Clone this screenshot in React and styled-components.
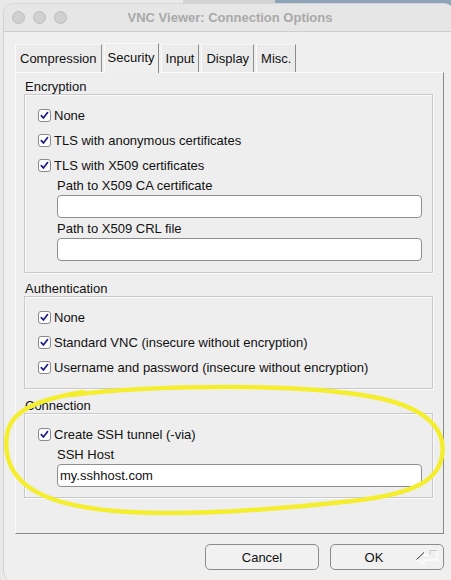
import React from 'react'
import styled, { createGlobalStyle } from 'styled-components'

const GlobalStyle = createGlobalStyle`
  html, body {
    margin: 0;
    height: 100%;
    overflow: hidden;
  }
  body {
    font-family: "Liberation Sans", Arial, sans-serif;
    font-size: 13px;
    color: #111;
    background: linear-gradient(to right, #e9e9e9 0 183px, #d2d2d2 183px 275px, #8fa4bb 275px);
  }
`;

const Backdrop = styled.div`
  display: flex;
  padding: 3px 0 0 3px;
`;

const Window = styled.div`
  position: relative;
  display: flex;
  flex-direction: column;
  width: 450px;
  height: 577px;
  flex-shrink: 0;
  background: #efefef;
  border-left: 1px solid #d0d0d0;
  border-top: 1px solid #d6d6d6;
  border-radius: 10px 10px 0 10px;
  overflow: hidden;
`;

const TitleBar = styled.div`
  display: grid;
  grid-template-columns: 1fr auto 1fr;
  align-items: center;
  height: 27px;
  padding: 0 8px;
  background: #e6e6e6;
  border-bottom: 1px solid #cdcdcd;
`;

const Lights = styled.div`
  display: flex;
  gap: 8px;
`;

const Light = styled.span`
  width: 11px;
  height: 11px;
  border-radius: 50%;
  background: #d0d0d0;
  border: 1px solid #bcbcbc;
`;

const Title = styled.div`
  font-weight: bold;
  font-size: 13px;
  color: #a9a9a9;
  margin-left: 2px;
`;

const Body = styled.div`
  display: flex;
  flex-direction: column;
  padding: 10px 0 0 11px;
`;

const TabRow = styled.div`
  display: flex;
  align-items: flex-end;
  gap: 2px;
  height: 30px;
`;

const Tab = styled.div`
  position: relative;
  z-index: ${p => (p.$active ? 1 : 0)};
  display: flex;
  align-items: center;
  height: ${p => (p.$active ? '30px' : '28px')};
  margin-bottom: ${p => (p.$active ? '-1px' : '0')};
  padding: ${p => (p.$active ? '0 3px 3px' : '0 4px')};
  background: ${p => (p.$active ? '#efefef' : '#ebebeb')};
  border-top: 1px solid ${p => (p.$active ? '#fafafa' : '#f6f6f6')};
  border-left: 1px solid #fbfbfb;
  border-right: 1px solid #8c8c8c;
  box-sizing: border-box;
`;

const Pane = styled.div`
  display: flex;
  flex-direction: column;
  width: 429px;
  height: 462px;
  box-sizing: border-box;
  padding: 6px 10px 0 8px;
  background: #eeeeee;
  border-style: solid;
  border-width: 1px;
  border-color: #fbfbfb #8a8a8a #8a8a8a #fbfbfb;
`;

const Section = styled.section`
  display: flex;
  flex-direction: column;
  margin-bottom: ${p => p.$gap || 0}px;
`;

const Legend = styled.div`
  padding-left: 1px;
  line-height: 15px;
`;

const Frame = styled.div`
  display: flex;
  flex-direction: column;
  padding: ${p => p.$pad || '8px 10px 8px 13px'};
  border: 1px solid #c9c9c9;
  box-shadow: inset 1px 1px 0 #fafafa, 1px 1px 0 #fafafa;
`;

const CheckRow = styled.label`
  display: flex;
  align-items: center;
  gap: 3px;
  height: 25px;
`;

const Box = styled.span`
  display: flex;
  align-items: center;
  justify-content: center;
  width: 13px;
  height: 13px;
  box-sizing: border-box;
  background: #fff;
  border: 1px solid #8a8a8a;
  border-radius: 3px;
`;

const Field = styled.div`
  display: flex;
  flex-direction: column;
  padding-left: 19px;
  margin-top: ${p => p.$top || 0}px;
`;

const FieldLabel = styled.div`
  line-height: 16px;
  margin-bottom: 1px;
`;

const Input = styled.div`
  height: 23px;
  box-sizing: border-box;
  padding: 0 2px;
  display: flex;
  align-items: center;
  background: #fff;
  border: 1px solid #8e8e8e;
  border-radius: 4px;
`;

const Footer = styled.div`
  display: flex;
  justify-content: flex-end;
  gap: 11px;
  width: 429px;
  margin-top: 10px;
`;

const Button = styled.div`
  display: flex;
  align-items: center;
  width: 114px;
  height: 26px;
  box-sizing: border-box;
  background: #f1f1f1;
  border: 1px solid #8c8c8c;
  border-radius: 5px;
`;

const ButtonText = styled.span`
  flex: 1;
  text-align: center;
  padding-left: ${p => p.$shift || 0}px;
`;

const Highlight = styled.svg`
  position: absolute;
  left: -3px;
  top: -3px;
  width: 451px;
  height: 580px;
  pointer-events: none;
`;

const Check = () => (
  <Box>
    <svg width="9" height="9" viewBox="0 0 9 9">
      <path d="M1.3 4.6 L3.4 7 L7.6 1.6" fill="none" stroke="#1c1c8c" strokeWidth="1.7" strokeLinecap="round" strokeLinejoin="round" />
    </svg>
  </Box>
);

const Option = ({ children }) => (
  <CheckRow>
    <Check />
    <span>{children}</span>
  </CheckRow>
);

// bevelled return-key hint on the default button
const ReturnKey = () => (
  <svg width="24" height="16" viewBox="0 0 24 16" style={{ marginRight: 4 }}>
    <path d="M1.5 10.5 L9 3.5 L9 6 L15 6 L15 1.5 L22 1.5 L22 11 L9 11 L9 14.5 Z" fill="none" stroke="#fdfdfd" strokeWidth="1.3" />
    <path d="M15 6 L15 1.5 L22 1.5" fill="none" stroke="#b5b5b5" strokeWidth="0.8" />
    <path d="M1.5 10.5 L9 3.5" stroke="#2a2a2a" strokeWidth="1" />
  </svg>
);

const tabs = ['Compression', 'Security', 'Input', 'Display', 'Misc.'];

export default function App() {
  return (
    <>
      <GlobalStyle />
      <Backdrop>
        <Window>
          <TitleBar>
            <Lights>
              <Light />
              <Light />
              <Light />
            </Lights>
            <Title>VNC Viewer: Connection Options</Title>
            <span />
          </TitleBar>
          <Body>
            <TabRow>
              {tabs.map(t => (
                <Tab key={t} $active={t === 'Security'}>{t}</Tab>
              ))}
            </TabRow>
            <Pane>
              <Section $gap={8}>
                <Legend>Encryption</Legend>
                <Frame $pad="8px 10px 11px 13px">
                  <Option>None</Option>
                  <Option>TLS with anonymous certificates</Option>
                  <Option>TLS with X509 certificates</Option>
                  <Field>
                    <FieldLabel>Path to X509 CA certificate</FieldLabel>
                    <Input />
                  </Field>
                  <Field $top={3}>
                    <FieldLabel>Path to X509 CRL file</FieldLabel>
                    <Input />
                  </Field>
                </Frame>
              </Section>
              <Section $gap={9}>
                <Legend>Authentication</Legend>
                <Frame>
                  <Option>None</Option>
                  <Option>Standard VNC (insecure without encryption)</Option>
                  <Option>Username and password (insecure without encryption)</Option>
                </Frame>
              </Section>
              <Section>
                <Legend>Connection</Legend>
                <Frame $pad="8px 10px 10px 13px">
                  <Option>Create SSH tunnel (-via)</Option>
                  <Field>
                    <FieldLabel>SSH Host</FieldLabel>
                    <Input>my.sshhost.com</Input>
                  </Field>
                </Frame>
              </Section>
            </Pane>
            <Footer>
              <Button>
                <ButtonText>Cancel</ButtonText>
              </Button>
              <Button>
                <ButtonText $shift={2}>OK</ButtonText>
                <ReturnKey />
              </Button>
            </Footer>
          </Body>
          {/* marker loop around the connection group */}
          <Highlight viewBox="0 0 451 580">
            <path
              d="M70 394 C150 384 300 382 372 396 C420 405 446 425 441 455 C437 480 412 492 360 499 C290 507 200 515 128 511 C60 507 12 492 6 452 C2 420 14 402 82 391"
              fill="none"
              stroke="#f5ee2e"
              strokeWidth="4.5"
              strokeLinecap="round"
            />
          </Highlight>
        </Window>
      </Backdrop>
    </>
  );
}
